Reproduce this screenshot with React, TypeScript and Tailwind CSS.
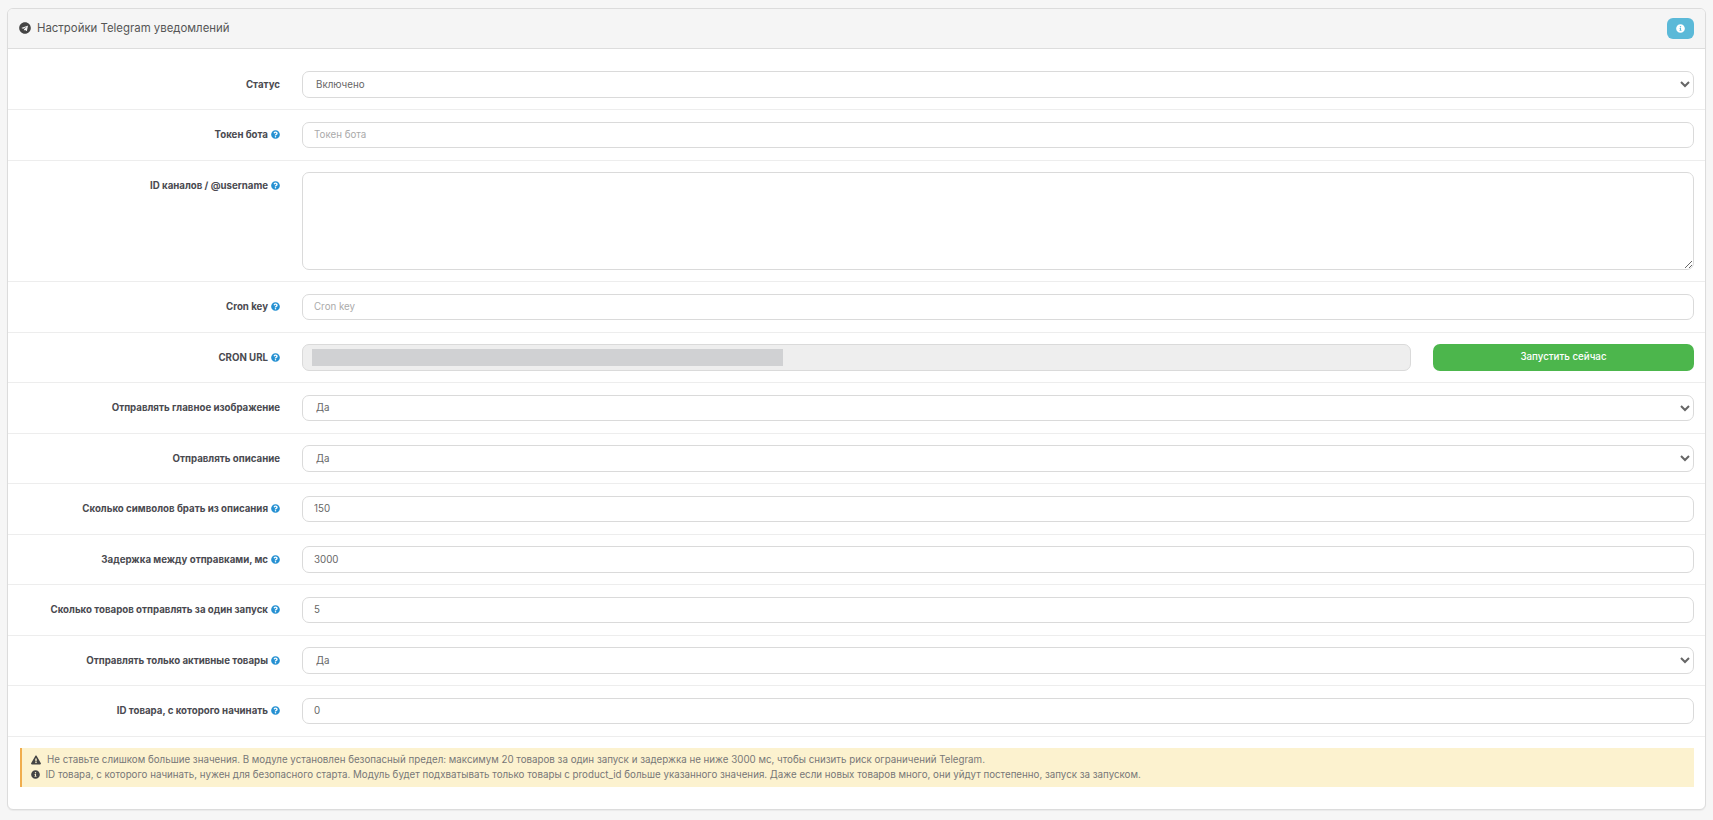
import { FaTelegram, FaQuestionCircle, FaInfoCircle, FaExclamationTriangle } from "react-icons/fa";

const inputCls =
  "block w-full h-[26.5px] rounded-[7px] border border-[#dadada] bg-white px-[11px] text-[9.75px] text-[#666] outline-none placeholder:text-[#aaa]";

function Help() {
  return <FaQuestionCircle className="ml-[3px] inline-block text-[9px] text-[#2490d2] align-[-1px]" />;
}

function Row({ label, help, top, children }: { label: string; help?: boolean; top?: boolean; children: React.ReactNode }) {
  return (
    <div className={`flex border-b border-[#ededed] py-[11.5px] pr-[11px] ${top ? "items-start" : "items-center"}`}>
      <label className={`mr-[22px] w-[272px] shrink-0 text-right text-[9.7px] font-bold leading-[16px] text-[#4a4a50] ${top ? "pt-[6px]" : "pt-[1px]"}`}>
        {label}
        {help && <Help />}
      </label>
      <div className="min-w-0 flex-1">{children}</div>
    </div>
  );
}

function Select({ value }: { value: string }) {
  return (
    <select className={`${inputCls} pl-[9px] pr-[4px]`} defaultValue={value}>
      <option>{value}</option>
    </select>
  );
}

export default function App() {
  return (
    <div className="min-h-[820px] bg-[#f6f6f6] px-[7px] pt-[8px] font-['Inter',sans-serif]">
      <div className="overflow-hidden rounded-[6px] border border-[#dcdcdc] bg-white pb-[22.5px] shadow-[0_1px_1px_rgba(0,0,0,0.05)]">
        <div className="flex h-[40px] items-center justify-between border-b border-[#dddddd] bg-[#f5f5f5] pl-[11px] pr-[11px]">
          <div className="flex items-center text-[11.4px] text-[#555]">
            <FaTelegram className="mr-[6px] text-[12px] text-[#444]" />
            <span>Настройки Telegram уведомлений</span>
          </div>
          <button className="flex h-[21px] w-[27px] items-center justify-center rounded-[6px] bg-[#5bb9d8] text-white">
            <FaInfoCircle className="text-[9px]" />
          </button>
        </div>

        <div className="pt-[10.5px]">
          <Row label="Статус"><Select value="Включено" /></Row>
          <Row label="Токен бота" help><input className={inputCls} placeholder="Токен бота" /></Row>
          <Row label="ID каналов / @username" help top>
            <textarea className="block h-[97.5px] w-full rounded-[7px] border border-[#dadada] bg-white px-[11px] py-[5px] text-[9.75px] text-[#666] outline-none" />
          </Row>
          <Row label="Cron key" help><input className={inputCls} placeholder="Cron key" /></Row>
          <Row label="CRON URL" help>
            <div className="flex gap-[22px]">
              <div className="flex h-[26.5px] w-[1109px] shrink-0 items-center rounded-[7px] border border-[#dadada] bg-[#eeeeee] px-[8.5px]">
                <div className="h-[16.5px] w-[471px] bg-[#d0d1d3]" />
              </div>
              <button className="h-[26.5px] flex-1 rounded-[7px] bg-[#4cb64c] text-[9.75px] font-medium text-white">Запустить сейчас</button>
            </div>
          </Row>
          <Row label="Отправлять главное изображение"><Select value="Да" /></Row>
          <Row label="Отправлять описание"><Select value="Да" /></Row>
          <Row label="Сколько символов брать из описания" help><input className={inputCls} defaultValue="150" /></Row>
          <Row label="Задержка между отправками, мс" help><input className={inputCls} defaultValue="3000" /></Row>
          <Row label="Сколько товаров отправлять за один запуск" help><input className={inputCls} defaultValue="5" /></Row>
          <Row label="Отправлять только активные товары" help><Select value="Да" /></Row>
          <Row label="ID товара, с которого начинать" help><input className={inputCls} defaultValue="0" /></Row>
        </div>

        <div className="ml-[12px] mr-[11px] mt-[11px] border-l-2 border-[#f0ad4e] bg-[#fcf2cf] py-[4.7px] pl-[8.5px] pr-[9px] text-[9.75px] leading-[15px] text-[#777]">
          <div className="flex items-center">
            <FaExclamationTriangle className="mr-[6.5px] text-[10px] text-[#444]" />
            <span>Не ставьте слишком большие значения. В модуле установлен безопасный предел: максимум 20 товаров за один запуск и задержка не ниже 3000 мс, чтобы снизить риск ограничений Telegram.</span>
          </div>
          <div className="flex items-center">
            <FaInfoCircle className="mr-[6px] text-[9px] text-[#444]" />
            <span>ID товара, с которого начинать, нужен для безопасного старта. Модуль будет подхватывать только товары с product_id больше указанного значения. Даже если новых товаров много, они уйдут постепенно, запуск за запуском.</span>
          </div>
        </div>
      </div>
    </div>
  );
}
